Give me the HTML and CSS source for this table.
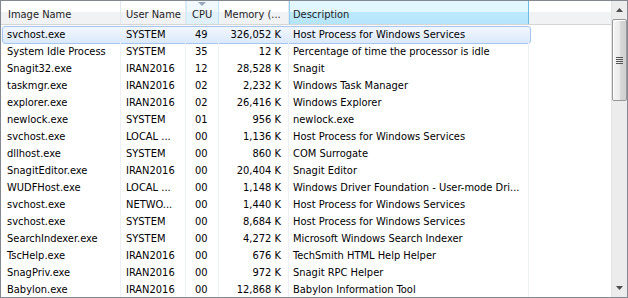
FILE: index.html
```
<!DOCTYPE html>
<html>
<head>
<meta charset="utf-8">
<link rel="stylesheet" href="styles.css">
</head>
<body>
<div class="frame">
  <div class="list">
    <div class="head">
      <div class="hc c1">Image Name</div>
      <div class="hc c2">User Name</div>
      <div class="hc c3 sorted"><span class="arrow"></span>CPU</div>
      <div class="hc c4">Memory (...</div>
      <div class="hc c5 hot">Description</div>
      <div class="hc rest"></div>
    </div>
    <div class="rows">
      <div class="row sel"><div class="c c1">svchost.exe</div><div class="c c2">SYSTEM</div><div class="c c3">49</div><div class="c c4">326,052 K</div><div class="c c5">Host Process for Windows Services</div></div>
      <div class="row"><div class="c c1">System Idle Process</div><div class="c c2">SYSTEM</div><div class="c c3">35</div><div class="c c4">12 K</div><div class="c c5">Percentage of time the processor is idle</div></div>
      <div class="row"><div class="c c1">Snagit32.exe</div><div class="c c2">IRAN2016</div><div class="c c3">12</div><div class="c c4">28,528 K</div><div class="c c5">Snagit</div></div>
      <div class="row"><div class="c c1">taskmgr.exe</div><div class="c c2">IRAN2016</div><div class="c c3">02</div><div class="c c4">2,232 K</div><div class="c c5">Windows Task Manager</div></div>
      <div class="row"><div class="c c1">explorer.exe</div><div class="c c2">IRAN2016</div><div class="c c3">02</div><div class="c c4">26,416 K</div><div class="c c5">Windows Explorer</div></div>
      <div class="row"><div class="c c1">newlock.exe</div><div class="c c2">SYSTEM</div><div class="c c3">01</div><div class="c c4">956 K</div><div class="c c5">newlock.exe</div></div>
      <div class="row"><div class="c c1">svchost.exe</div><div class="c c2">LOCAL ...</div><div class="c c3">00</div><div class="c c4">1,136 K</div><div class="c c5">Host Process for Windows Services</div></div>
      <div class="row"><div class="c c1">dllhost.exe</div><div class="c c2">SYSTEM</div><div class="c c3">00</div><div class="c c4">860 K</div><div class="c c5">COM Surrogate</div></div>
      <div class="row"><div class="c c1">SnagitEditor.exe</div><div class="c c2">IRAN2016</div><div class="c c3">00</div><div class="c c4">20,404 K</div><div class="c c5">Snagit Editor</div></div>
      <div class="row"><div class="c c1">WUDFHost.exe</div><div class="c c2">LOCAL ...</div><div class="c c3">00</div><div class="c c4">1,148 K</div><div class="c c5">Windows Driver Foundation - User-mode Dri...</div></div>
      <div class="row"><div class="c c1">svchost.exe</div><div class="c c2">NETWO...</div><div class="c c3">00</div><div class="c c4">1,440 K</div><div class="c c5">Host Process for Windows Services</div></div>
      <div class="row"><div class="c c1">svchost.exe</div><div class="c c2">SYSTEM</div><div class="c c3">00</div><div class="c c4">8,684 K</div><div class="c c5">Host Process for Windows Services</div></div>
      <div class="row"><div class="c c1">SearchIndexer.exe</div><div class="c c2">SYSTEM</div><div class="c c3">00</div><div class="c c4">4,272 K</div><div class="c c5">Microsoft Windows Search Indexer</div></div>
      <div class="row"><div class="c c1">TscHelp.exe</div><div class="c c2">IRAN2016</div><div class="c c3">00</div><div class="c c4">676 K</div><div class="c c5">TechSmith HTML Help Helper</div></div>
      <div class="row"><div class="c c1">SnagPriv.exe</div><div class="c c2">IRAN2016</div><div class="c c3">00</div><div class="c c4">972 K</div><div class="c c5">Snagit RPC Helper</div></div>
      <div class="row"><div class="c c1">Babylon.exe</div><div class="c c2">IRAN2016</div><div class="c c3">00</div><div class="c c4">12,868 K</div><div class="c c5">Babylon Information Tool</div></div>
    </div>
  </div>
  <div class="scroll">
    <div class="sbtn"><svg width="7" height="4" viewBox="0 0 7 4"><path d="M3.5 0 L7 4 L0 4 Z" fill="#4d4d4d"/></svg></div>
    <div class="thumb"><div class="grip"><i></i><i></i><i></i><i></i></div></div>
    <div class="track"></div>
    <div class="sbtn"><svg width="7" height="4" viewBox="0 0 7 4"><path d="M0 0 L7 0 L3.5 4 Z" fill="#4d4d4d"/></svg></div>
  </div>
</div>
</body>
</html>
```
FILE: styles.css
```
* { box-sizing: border-box; }
html, body { margin: 0; padding: 0; background: #fff; }
body {
  font-family: "DejaVu Sans Condensed", "DejaVu Sans", sans-serif;
  font-stretch: condensed;
  font-size: 11px;
  color: #000;
}
.frame {
  width: 628px;
  height: 298px;
  border: 1px solid #828790;
  display: flex;
  overflow: hidden;
  background: #fff;
}
.list {
  width: 610px;
  display: flex;
  flex-direction: column;
}
.head {
  height: 24px;
  display: flex;
  border-bottom: 1px solid #d5d5d5;
  background: linear-gradient(#ffffff 0, #ffffff 11px, #f1f2f4 11px, #f1f2f4 100%);
  color: #1e1e1e;
}
.hc {
  height: 23px;
  line-height: 27px;
  border-right: 1px solid #e3e8ee;
  white-space: nowrap;
  overflow: hidden;
  position: relative;
}
.c1 { width: 120px; padding-left: 6px; }
.c2 { width: 65px; padding-left: 5px; }
.c3 { width: 33px; padding-left: 9px; }
.c4 { width: 70px; padding-right: 7px; text-align: right; }
.c5 { width: 240px; padding-left: 4px; }
.hc.c1 { padding-left: 7px; }
.hc.c3 { padding-left: 6px; }
.hc.c4 { text-align: left; padding-left: 5px; padding-right: 0; }
.hc.c5 { padding-left: 4px; }
.hc.rest { flex: 1; border-right: none; }
.hc.sorted {
  background: linear-gradient(#f2f9fc 0, #f2f9fc 11px, #e1f1f9 11px, #e1f1f9 100%);
  border-right-color: #bde6fd;
  box-shadow: inset 1px 0 0 #d4eefb;
}
.arrow {
  position: absolute;
  left: 12px;
  top: 1px;
  width: 0;
  height: 0;
  border-left: 4px solid transparent;
  border-right: 4px solid transparent;
  border-top: 4px solid #97a9bd;
}
.hc.hot {
  background: linear-gradient(#e3f7ff 0, #e3f7ff 11px, #bde9fc 11px, #b5e5fb 100%);
  border-right-color: #69bbe3;
  box-shadow: inset 1px 0 0 #8fd0ef;
}
.rows { flex: 1; }
.row {
  height: 17px;
  display: flex;
  position: relative;
}
.c {
  height: 17px;
  line-height: 20px;
  white-space: nowrap;
  overflow: hidden;
  border-right: 1px solid #edf0f4;
}
.row.sel::before {
  content: "";
  position: absolute;
  left: 1px;
  top: 1px;
  width: 527px;
  height: 16px;
  border: 1px solid #a5c6ef;
  border-radius: 3px;
  background: linear-gradient(#f2f7fe, #dbe9fb);
}
.row.sel .c { position: relative; border-right-color: transparent; }
.scroll {
  width: 16px;
  display: flex;
  flex-direction: column;
  background: #ececec;
  border-left: 1px solid #e3e3e3;
}
.sbtn {
  height: 18px;
  display: flex;
  align-items: center;
  justify-content: center;
}
.thumb {
  height: 82px;
  border: 1px solid #979797;
  border-radius: 2px;
  background: linear-gradient(90deg, #f4f4f4 0, #ebebeb 50%, #d8d8d8 51%, #d0d0d0 100%);
  box-shadow: inset 1px 1px 0 #fff;
  display: flex;
  align-items: center;
  justify-content: center;
}
.grip { display: flex; flex-direction: column; gap: 1px; }
.grip i { display: block; width: 7px; height: 1px; background: #555; }
.track { flex: 1; }
```
